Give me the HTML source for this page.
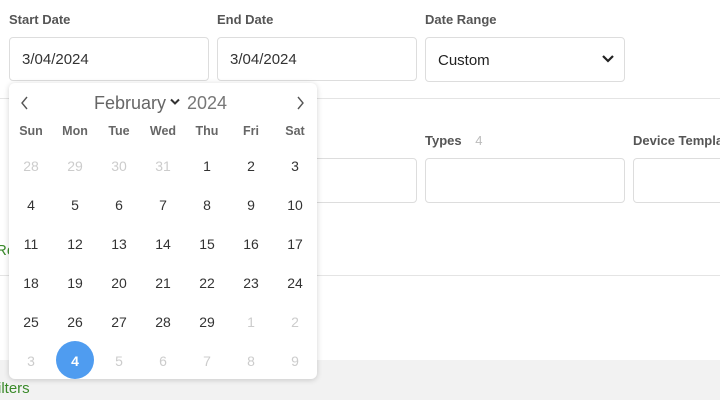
<!DOCTYPE html>
<html><head><style>
*{box-sizing:border-box;margin:0;padding:0}
body{width:720px;height:400px;overflow:hidden;background:#fff;font-family:"Liberation Sans",sans-serif;position:relative;color:#333}
.a{position:absolute}
.lbl{font-size:13px;font-weight:bold;color:#555}
.box{border:1px solid #ddd;border-radius:4px;background:#fff}
.val{font-size:15px;color:#333}
.pk{left:9px;top:83px;width:308px;height:296px;background:#fff;border-radius:6px;box-shadow:0 1px 6px rgba(0,0,0,.18)}
.c{position:absolute;width:30px;margin-left:-15px;text-align:center;font-size:14px;color:#333}
.h{font-weight:bold;color:#666;font-size:12.5px}
.g{color:#ccc}
</style></head><body>
<div class="a lbl" style="left:9px;top:12px">Start Date</div>
<div class="a lbl" style="left:217px;top:12px">End Date</div>
<div class="a lbl" style="left:425px;top:12px">Date Range</div>
<div class="a box" style="left:9px;top:37px;width:200px;height:44px"></div>
<div class="a val" style="left:22px;top:51px">3/04/2024</div>
<div class="a box" style="left:217px;top:37px;width:200px;height:44px"></div>
<div class="a val" style="left:230px;top:51px">3/04/2024</div>
<div class="a box" style="left:425px;top:37px;width:200px;height:45px"></div>
<div class="a val" style="left:438px;top:52px;color:#222">Custom</div>
<svg class="a" style="left:601px;top:54px" width="14" height="10"><path d="M2 2l5 5 5-5" stroke="#222" stroke-width="2.2" fill="none"/></svg>
<div class="a" style="left:0;top:98px;width:720px;height:1px;background:#e4e4e4"></div>
<div class="a lbl" style="left:425px;top:133px">Types <span style="color:#bbb;font-weight:normal;margin-left:10px">4</span></div>
<div class="a lbl" style="left:633px;top:133px;white-space:nowrap">Device Template</div>
<div class="a box" style="left:217px;top:158px;width:200px;height:45px"></div>
<div class="a box" style="left:425px;top:158px;width:200px;height:45px"></div>
<div class="a box" style="left:633px;top:158px;width:200px;height:45px"></div>
<div class="a" style="left:-4px;top:242px;color:#3a8a2a;font-size:15px">Re</div>
<div class="a" style="left:0;top:275px;width:720px;height:1px;background:#e4e4e4"></div>
<div class="a" style="left:0;top:360px;width:720px;height:40px;background:#f2f2f2"></div>
<div class="a" style="left:-2px;top:380px;color:#3a8a2a;font-size:15px">ilters</div>
<div class="a pk">
<svg class="a" style="left:11px;top:13px" width="10" height="14"><path d="M7 1L2 7l5 6" stroke="#555" stroke-width="1.4" fill="none"/></svg>
<svg class="a" style="left:286px;top:13px" width="10" height="14"><path d="M3 1l5 6-5 6" stroke="#555" stroke-width="1.4" fill="none"/></svg>
<div class="a" style="left:85px;top:10px;font-size:18px;color:#666">February</div>
<svg class="a" style="left:161px;top:15px" width="10" height="8"><path d="M1 1.5l4 4 4-4" stroke="#333" stroke-width="2" fill="none"/></svg>
<div class="a" style="left:178px;top:10px;font-size:18px;color:#777">2024</div>
</div>
<div class="a" style="left:0;top:0;width:0;height:0">
<div class="c h" style="left:31px;top:124px">Sun</div><div class="c h" style="left:75px;top:124px">Mon</div><div class="c h" style="left:119px;top:124px">Tue</div><div class="c h" style="left:163px;top:124px">Wed</div><div class="c h" style="left:207px;top:124px">Thu</div><div class="c h" style="left:251px;top:124px">Fri</div><div class="c h" style="left:295px;top:124px">Sat</div>
<div class="c g" style="left:31px;top:158px">28</div><div class="c g" style="left:75px;top:158px">29</div><div class="c g" style="left:119px;top:158px">30</div><div class="c g" style="left:163px;top:158px">31</div><div class="c" style="left:207px;top:158px">1</div><div class="c" style="left:251px;top:158px">2</div><div class="c" style="left:295px;top:158px">3</div>
<div class="c" style="left:31px;top:197px">4</div><div class="c" style="left:75px;top:197px">5</div><div class="c" style="left:119px;top:197px">6</div><div class="c" style="left:163px;top:197px">7</div><div class="c" style="left:207px;top:197px">8</div><div class="c" style="left:251px;top:197px">9</div><div class="c" style="left:295px;top:197px">10</div>
<div class="c" style="left:31px;top:236px">11</div><div class="c" style="left:75px;top:236px">12</div><div class="c" style="left:119px;top:236px">13</div><div class="c" style="left:163px;top:236px">14</div><div class="c" style="left:207px;top:236px">15</div><div class="c" style="left:251px;top:236px">16</div><div class="c" style="left:295px;top:236px">17</div>
<div class="c" style="left:31px;top:275px">18</div><div class="c" style="left:75px;top:275px">19</div><div class="c" style="left:119px;top:275px">20</div><div class="c" style="left:163px;top:275px">21</div><div class="c" style="left:207px;top:275px">22</div><div class="c" style="left:251px;top:275px">23</div><div class="c" style="left:295px;top:275px">24</div>
<div class="c" style="left:31px;top:314px">25</div><div class="c" style="left:75px;top:314px">26</div><div class="c" style="left:119px;top:314px">27</div><div class="c" style="left:163px;top:314px">28</div><div class="c" style="left:207px;top:314px">29</div><div class="c g" style="left:251px;top:314px">1</div><div class="c g" style="left:295px;top:314px">2</div>
<div class="a" style="left:56px;top:341px;width:38px;height:38px;border-radius:50%;background:#4f9cf0"></div>
<div class="c g" style="left:31px;top:353px">3</div><div class="c" style="left:75px;top:353px;color:#fff;font-weight:bold">4</div><div class="c g" style="left:119px;top:353px">5</div><div class="c g" style="left:163px;top:353px">6</div><div class="c g" style="left:207px;top:353px">7</div><div class="c g" style="left:251px;top:353px">8</div><div class="c g" style="left:295px;top:353px">9</div>
</div>
</body></html>
